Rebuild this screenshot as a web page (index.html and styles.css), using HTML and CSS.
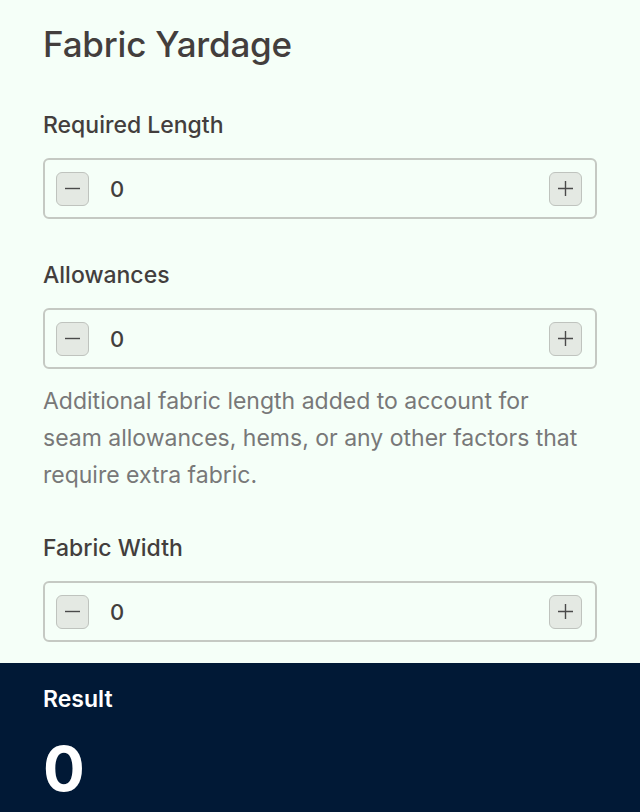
FILE: index.html
```html
<!DOCTYPE html>
<html>

<head>
  <title>Fabric Yardage</title>
  <meta name="viewport" content="width=device-width, initial-scale=1.0">
  <link rel="stylesheet" href="styles.css">
</head>

<body>
  <div class="calc">
    <h1 class="calc-title">Fabric Yardage</h1>

    <div class="field">
      <label class="field-label" for="length">Required Length</label>
      <div class="stepper">
        <button class="step-btn" type="button" aria-label="Decrease">
          <svg width="17" height="17" viewBox="0 0 17 17"><path d="M1 8.5h15" stroke="#4a4a4a" stroke-width="1.4" /></svg>
        </button>
        <input class="step-value" id="length" type="text" value="0">
        <button class="step-btn" type="button" aria-label="Increase">
          <svg width="17" height="17" viewBox="0 0 17 17"><path d="M1 8.5h15M8.5 1v15" stroke="#4a4a4a" stroke-width="1.4" /></svg>
        </button>
      </div>
    </div>

    <div class="field field-hinted">
      <label class="field-label" for="allowances">Allowances</label>
      <div class="stepper">
        <button class="step-btn" type="button" aria-label="Decrease">
          <svg width="17" height="17" viewBox="0 0 17 17"><path d="M1 8.5h15" stroke="#4a4a4a" stroke-width="1.4" /></svg>
        </button>
        <input class="step-value" id="allowances" type="text" value="0">
        <button class="step-btn" type="button" aria-label="Increase">
          <svg width="17" height="17" viewBox="0 0 17 17"><path d="M1 8.5h15M8.5 1v15" stroke="#4a4a4a" stroke-width="1.4" /></svg>
        </button>
      </div>
      <p class="hint">Additional fabric length added to account for seam allowances, hems, or any other factors that require extra fabric.</p>
    </div>

    <div class="field field-last">
      <label class="field-label" for="width">Fabric Width</label>
      <div class="stepper">
        <button class="step-btn" type="button" aria-label="Decrease">
          <svg width="17" height="17" viewBox="0 0 17 17"><path d="M1 8.5h15" stroke="#4a4a4a" stroke-width="1.4" /></svg>
        </button>
        <input class="step-value" id="width" type="text" value="0">
        <button class="step-btn" type="button" aria-label="Increase">
          <svg width="17" height="17" viewBox="0 0 17 17"><path d="M1 8.5h15M8.5 1v15" stroke="#4a4a4a" stroke-width="1.4" /></svg>
        </button>
      </div>
    </div>
  </div>

  <div class="result">
    <div class="result-label">Result</div>
    <div class="result-value">0</div>
  </div>
</body>

</html>
```

FILE: styles.css
```css
body {
  font-family: Inter, "Noto Sans", sans-serif;
  margin: 0;
  padding: 0;
  background-color: #f5fff8;
  color: #433e3d;
}

.calc {
  padding: 24px 43px 0;
}

.calc-title {
  font-size: 35px;
  line-height: 40px;
  font-weight: 500;
  margin: 0 0 47px;
  letter-spacing: -0.2px;
}

.field {
  margin-bottom: 42px;
}

.field-hinted {
  margin-bottom: 40px;
}

.field-last {
  margin-bottom: 21px;
}

.field-label {
  display: block;
  font-size: 23px;
  line-height: 28px;
  font-weight: 500;
  margin-bottom: 19px;
}

.stepper {
  display: flex;
  align-items: center;
  height: 57px;
  padding: 0 13px 0 11px;
  border: 2px solid #c5c9c3;
  border-radius: 6px;
  background-color: #f5fff8;
}

.step-btn {
  display: flex;
  align-items: center;
  justify-content: center;
  width: 33px;
  height: 34px;
  padding: 0;
  border: 1.5px solid #bfc3be;
  border-radius: 6px;
  background-color: #e4e9e3;
  cursor: pointer;
}

.step-value {
  flex: 1;
  min-width: 0;
  margin: 0 0 0 21px;
  padding: 0;
  border: none;
  background: transparent;
  font-family: inherit;
  font-size: 22px;
  font-weight: 500;
  color: #433e3d;
  outline: none;
}

.hint {
  max-width: 546px;
  margin: 14px 0 0;
  font-size: 23px;
  line-height: 37px;
  color: #787878;
}

.result {
  background-color: #011936;
  color: #fff;
  padding: 22px 43px 0;
  height: 128px;
}

.result-label {
  font-size: 23px;
  line-height: 28px;
  font-weight: 600;
}

.result-value {
  margin-top: 16px;
  font-size: 62px;
  line-height: 80px;
  font-weight: 700;
}
```
